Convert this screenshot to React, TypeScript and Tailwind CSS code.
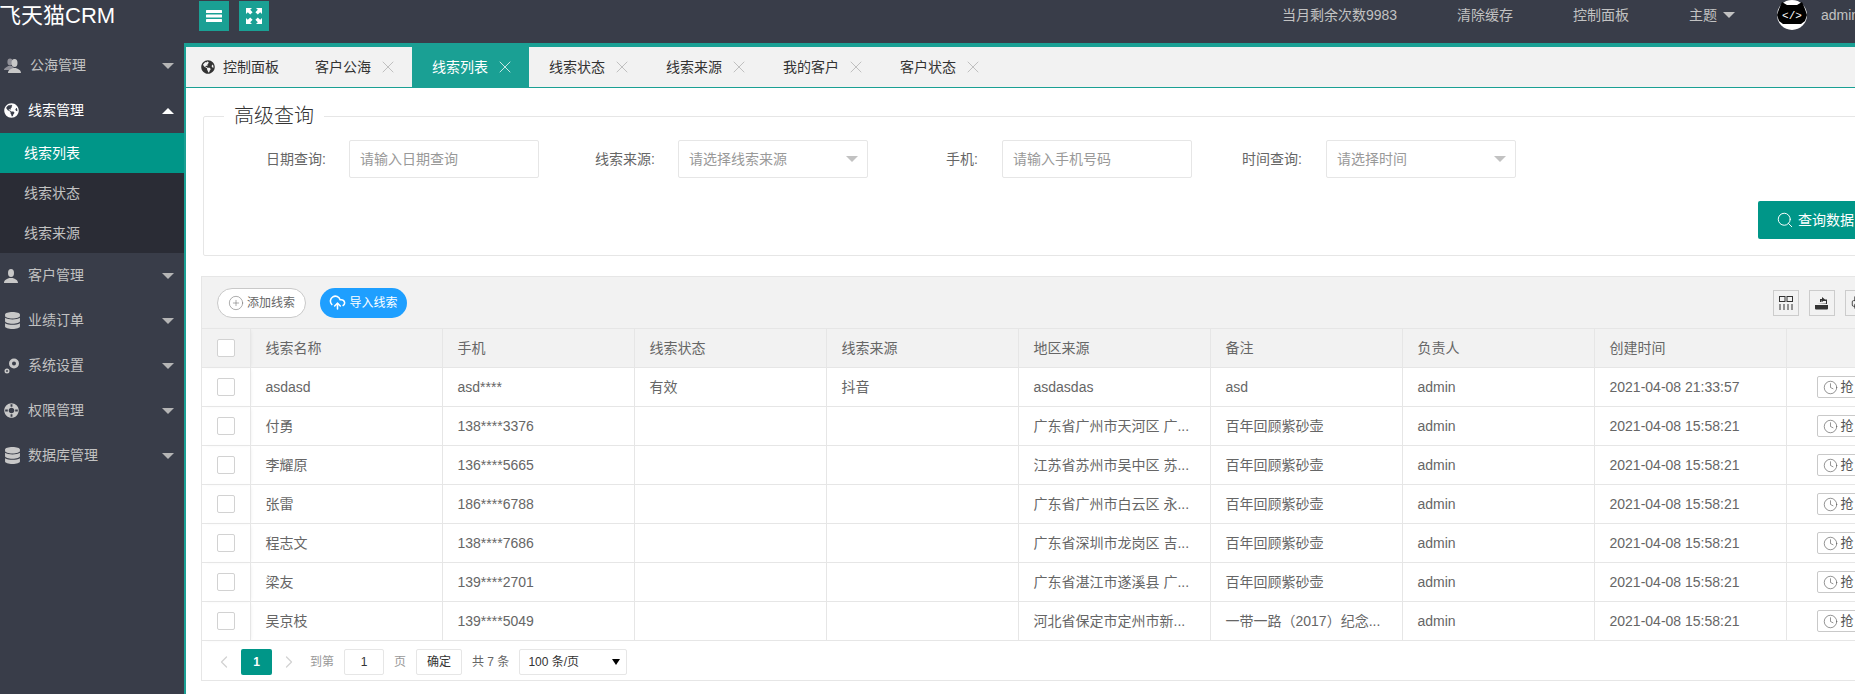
import { FaDatabase, FaGlobeAmericas, FaLifeRing } from 'react-icons/fa'
import { ChevronLeft, ChevronRight, CirclePlus, Clock, CloudUpload, Printer, Search, X } from 'lucide-react'

const font = 'font-["Liberation_Sans","Noto_Sans_CJK_SC",sans-serif]'

const tabs = ['客户公海', '线索列表', '线索状态', '线索来源', '我的客户', '客户状态']

const columns = ['线索名称', '手机', '线索状态', '线索来源', '地区来源', '备注', '负责人', '创建时间', '']

const rows = [
  ['asdasd', 'asd****', '有效', '抖音', 'asdasdas', 'asd', 'admin', '2021-04-08 21:33:57'],
  ['付勇', '138****3376', '', '', '广东省广州市天河区 广...', '百年回顾紫砂壶', 'admin', '2021-04-08 15:58:21'],
  ['李耀原', '136****5665', '', '', '江苏省苏州市吴中区 苏...', '百年回顾紫砂壶', 'admin', '2021-04-08 15:58:21'],
  ['张雷', '186****6788', '', '', '广东省广州市白云区 永...', '百年回顾紫砂壶', 'admin', '2021-04-08 15:58:21'],
  ['程志文', '138****7686', '', '', '广东省深圳市龙岗区 吉...', '百年回顾紫砂壶', 'admin', '2021-04-08 15:58:21'],
  ['梁友', '139****2701', '', '', '广东省湛江市遂溪县 广...', '百年回顾紫砂壶', 'admin', '2021-04-08 15:58:21'],
  ['吴京枝', '139****5049', '', '', '河北省保定市定州市新...', '一带一路（2017）纪念...', 'admin', '2021-04-08 15:58:21'],
]

const CaretDown = ({ className }: { className: string }) => (
  <span className={`block h-0 w-0 border-x-[6px] border-t-[6px] border-x-transparent ${className}`} />
)

const UserIcon = () => (
  <svg width="14" height="14" viewBox="0 0 14 14" fill="#c8c8c8">
    <ellipse cx="7" cy="4" rx="3" ry="4" />
    <path d="M0 14c0-3 3-4 5-5h4c2 1 5 2 5 5z" />
  </svg>
)

const UsersIcon = () => (
  <svg width="17" height="15" viewBox="0 0 17 15">
    <ellipse cx="6" cy="4" rx="2.6" ry="3.4" fill="#8f8f97" />
    <path d="M0 12c0-2 3-3 4-4h4l2 2v2z" fill="#8f8f97" />
    <ellipse cx="10.5" cy="5" rx="3" ry="4" fill="#c8c8c8" />
    <path d="M4 15c0-3 3-4 5-5h3c2 1 5 2 5 5z" fill="#c8c8c8" />
  </svg>
)

const CogsIcon = () => (
  <svg width="16" height="16" viewBox="0 0 16 16" fill="none" stroke="#c8c8c8">
    <circle cx="10" cy="5.500" r="3.500" strokeWidth="3" />
    <circle cx="3" cy="13" r="1.700" strokeWidth="1.600" />
  </svg>
)

const NavItem = ({ icon, label, open, indent }: { icon: React.ReactNode; label: string; open?: boolean; indent?: boolean }) => (
  <div className={`flex h-[45px] items-center pl-[4px] pr-[10px] text-[14px] ${open ? 'text-white' : 'text-[#c2c2c2]'}`}>
    <span className={`flex items-center ${indent ? 'w-[26px]' : 'w-[24px]'}`}>{icon}</span>
    <span className="flex-1">{label}</span>
    {open
      ? <span className="block h-0 w-0 border-x-[6px] border-b-[6px] border-x-transparent border-b-white" />
      : <CaretDown className="border-t-[#b5b5b5]" />}
  </div>
)

const Checkbox = () => <span className="block h-[18px] w-[18px] rounded-[2px] border border-[#d2d2d2] bg-white" />

const Select = ({ text }: { text: string }) => (
  <div className="flex h-[38px] w-[190px] items-center justify-between rounded-[2px] border border-[#e6e6e6] pl-[10px] pr-[9px] text-[14px] text-[#999]">
    {text}
    <CaretDown className="border-t-[#c2c2c2]" />
  </div>
)

const Input = ({ text }: { text: string }) => (
  <div className="flex h-[38px] w-[190px] items-center rounded-[2px] border border-[#e6e6e6] pl-[10px] text-[14px] text-[#999]">{text}</div>
)

const ToolBtn = ({ children }: { children: React.ReactNode }) => (
  <span className="flex h-[26px] w-[26px] items-center justify-center border border-[#ccc] text-[#333]">{children}</span>
)

const App = () => {
  return (
    <div className={`flex h-[694px] w-[1855px] flex-col overflow-hidden bg-[#393D49] ${font}`}>
      <header className="flex h-[43px] shrink-0 items-start">
        <div className="w-[199px] shrink-0 pt-[1px] indent-[-1px] text-[22px] leading-[30px] text-white">飞天猫CRM</div>
        <button className="mt-[1px] flex h-[30px] w-[30px] shrink-0 items-center justify-center bg-[#1AA094] text-white">
          <svg width="16" height="14" viewBox="0 0 16 14" fill="currentColor"><rect y="1" width="16" height="3" rx="0.5" /><rect y="5.5" width="16" height="3" rx="0.5" /><rect y="10" width="16" height="3" rx="0.5" /></svg>
        </button>
        <button className="ml-[10px] mt-[1px] flex h-[30px] w-[30px] shrink-0 items-center justify-center bg-[#1AA094] text-white">
          <svg width="16" height="16" viewBox="0 0 16 16" fill="currentColor"><path d="M0 0h6L4.2 1.8 6.6 4.2 4.2 6.6 1.8 4.2 0 6zM16 0v6l-1.8-1.8-2.4 2.4-2.4-2.4 2.4-2.4L10 0zM0 16v-6l1.8 1.8 2.4-2.4 2.4 2.4-2.4 2.4L6 16zM16 16h-6l1.8-1.8-2.4-2.4 2.4-2.4 2.4 2.4L16 10z" /></svg>
        </button>
        <div className="ml-[1013px] flex h-[30px] shrink-0 items-center text-[14px] text-[#c2c2c2]">
          <span className="w-[175px]">当月剩余次数9983</span>
          <span className="w-[116px]">清除缓存</span>
          <span className="w-[116px]">控制面板</span>
          <span className="flex w-[88px] items-center gap-[6px]">主题<CaretDown className="border-t-[#c2c2c2]" /></span>
          <svg width="30" height="30" viewBox="0 0 30 30">
            <circle cx="15" cy="15" r="15" fill="#fff" />
            <path d="M2 9 5 2l5 3h10l5-3 3 7 2 6-2 6-4 3H6l-4-3-2-6z" fill="#000" />
            <text x="15" y="19" textAnchor="middle" fill="#fff" fontSize="11" fontFamily="Liberation Mono, monospace">&lt;/&gt;</text>
          </svg>
          <span className="ml-[14px]">admin</span>
        </div>
      </header>

      <div className="flex min-h-0 flex-1">
        <aside className="w-[184px] shrink-0">
          <NavItem icon={<UsersIcon />} label="公海管理" indent />
          <NavItem icon={<FaGlobeAmericas size={15} className="text-white" />} label="线索管理" open />
          <div className="bg-[#2A2C35] text-[14px] text-[#c2c2c2]">
            <div className="flex h-[40px] items-center bg-[#009688] pl-[24px] text-white">线索列表</div>
            <div className="flex h-[40px] items-center pl-[24px]">线索状态</div>
            <div className="flex h-[40px] items-center pl-[24px]">线索来源</div>
          </div>
          <NavItem icon={<UserIcon />} label="客户管理" />
          <NavItem icon={<FaDatabase size={17} className="text-[#c8c8c8]" />} label="业绩订单" />
          <NavItem icon={<CogsIcon />} label="系统设置" />
          <NavItem icon={<FaLifeRing size={15} className="rotate-45 text-[#c8c8c8]" />} label="权限管理" />
          <NavItem icon={<FaDatabase size={17} className="text-[#c8c8c8]" />} label="数据库管理" />
        </aside>

        <main className="min-w-0 flex-1 overflow-hidden border-l-[2px] border-t-[4px] border-[#1AA094] bg-white">
          <div className="flex h-[41px] border-b border-[#1AA094] bg-[#f2f2f2] text-[14px] text-[#333]">
            <div className="flex w-[109px] items-center pl-[15px]">
              <FaGlobeAmericas size={14} className="mr-[8px] text-[#333]" />控制面板
            </div>
            {tabs.map((tab, i) => (
              <div key={tab} className={`flex w-[117px] items-center pl-[20px] ${i === 1 ? 'bg-[#1AA094] text-white' : ''}`}>
                {tab}
                <X size={20} strokeWidth={1.1} className={`ml-[7px] ${i === 1 ? 'text-[#d8efec]' : 'text-[#bbb]'}`} />
              </div>
            ))}
          </div>

          <div className="w-[1800px] pl-[15px]">
            <fieldset className="ml-[2px] mt-[16px] h-[152px] rounded-[2px] border border-[#e6e6e6] px-0 pb-0">
              <legend className="ml-[20px] px-[10px] text-[20px] font-light leading-[24px] text-[#333]">高级查询</legend>
              <div className="flex pt-[12px] text-[14px] text-[#666]">
                <span className="flex h-[38px] w-[122px] items-center justify-end">日期查询:</span>
                <div className="ml-[23px]"><Input text="请输入日期查询" /></div>
                <span className="flex h-[38px] w-[116px] items-center justify-end">线索来源:</span>
                <div className="ml-[23px]"><Select text="请选择线索来源" /></div>
                <span className="flex h-[38px] w-[110px] items-center justify-end">手机:</span>
                <div className="ml-[24px]"><Input text="请输入手机号码" /></div>
                <span className="flex h-[38px] w-[110px] items-center justify-end">时间查询:</span>
                <div className="ml-[24px]"><Select text="请选择时间" /></div>
              </div>
              <button className="ml-[1554px] mt-[23px] flex h-[38px] w-[110px] items-center gap-[4px] rounded-[2px] bg-[#009688] pl-[18px] text-[14px] text-white">
                <Search size={18} strokeWidth={1.3} />查询数据
              </button>
            </fieldset>

            <div className="mt-[20px] w-[1778px] border border-[#e6e6e6]">
              <div className="flex h-[51px] items-center justify-between bg-[#f2f2f2] pl-[15px] pr-[107px]">
                <div className="flex items-center gap-[14px]">
                  <button className="flex h-[30px] w-[89px] items-center justify-center gap-[3px] rounded-full border border-[#c9c9c9] bg-white text-[12px] text-[#666]">
                    <CirclePlus size={16} strokeWidth={0.8} />添加线索
                  </button>
                  <button className="flex h-[30px] w-[87px] items-center justify-center gap-[3px] rounded-full bg-[#1E9FFF] text-[12px] text-white">
                    <CloudUpload size={17} strokeWidth={2.2} />导入线索
                  </button>
                </div>
                <div className="flex items-center gap-[10px]">
                  <ToolBtn>
                    <svg width="14" height="14" viewBox="0 0 14 14" fill="none" stroke="currentColor"><rect x="0.5" y="0.5" width="5.5" height="5" /><rect x="8" y="0.5" width="5.5" height="5" /><path d="M1 8v6M5 8v6M9 8v6M13 8v6" /></svg>
                  </ToolBtn>
                  <ToolBtn>
                    <svg width="14" height="14" viewBox="0 0 14 14" fill="currentColor"><path d="M0 9h13v3.5a1 1 0 0 1-1 1H1a1 1 0 0 1-1-1zM2 7.5h9V5H8V3.5h4V8h-1zM5 6V3h2V1l3 2.5L7 6V4.5H6.500V6z" /></svg>
                  </ToolBtn>
                  <ToolBtn><Printer size={15} strokeWidth={1.4} /></ToolBtn>
                </div>
              </div>
              <table className="w-[1776px] table-fixed border-collapse text-[14px] text-[#666]">
                <colgroup>
                  <col className="w-[48px]" />
                  {columns.map((c, i) => <col key={i} className="w-[192px]" />)}
                </colgroup>
                <thead>
                  <tr className="h-[39px] bg-[#f2f2f2]">
                    <th className="border-y border-r border-[#e6e6e6] pl-[15px] shadow-[2px_0_4px_-2px_rgba(0,0,0,0.12)]"><Checkbox /></th>
                    {columns.map((c, i) => (
                      <th key={i} className="border border-[#e6e6e6] pl-[15px] text-left font-normal">{c}</th>
                    ))}
                  </tr>
                </thead>
                <tbody>
                  {rows.map((row, i) => (
                    <tr key={i} className="h-[39px]">
                      <td className="border-y border-r border-[#e6e6e6] pl-[15px] shadow-[2px_0_4px_-2px_rgba(0,0,0,0.12)]"><Checkbox /></td>
                      {row.map((cell, j) => (
                        <td key={j} className="whitespace-nowrap border border-[#e6e6e6] px-[15px]">{cell}</td>
                      ))}
                      <td className="border border-[#e6e6e6] pl-[30px]">
                        <span className="flex h-[22px] w-[60px] items-center gap-[3px] rounded-[2px] border border-[#c9c9c9] pl-[5px] text-[13px] text-[#555]">
                          <Clock size={15} strokeWidth={1} />抢
                        </span>
                      </td>
                    </tr>
                  ))}
                </tbody>
              </table>
              <div className="flex h-[39px] items-center pl-[12px] pt-[2px] text-[12px] text-[#666]">
                <span className="flex w-[27px] text-[#d2d2d2]"><ChevronLeft size={20} strokeWidth={1.5} /></span>
                <span className="flex h-[26px] w-[31px] items-center justify-center rounded-[2px] bg-[#009688] font-bold text-white">1</span>
                <span className="flex w-[38px] pl-[7px] text-[#d2d2d2]"><ChevronRight size={20} strokeWidth={1.5} /></span>
                <span className="text-[#999]">到第</span>
                <span className="ml-[10px] flex h-[26px] w-[40px] items-center justify-center rounded-[2px] border border-[#e6e6e6] text-[#333]">1</span>
                <span className="ml-[10px] text-[#999]">页</span>
                <span className="ml-[10px] flex h-[26px] w-[46px] items-center justify-center rounded-[2px] border border-[#e6e6e6] text-[#333]">确定</span>
                <span className="ml-[10px]">共 7 条</span>
                <span className="ml-[10px] flex h-[26px] w-[108px] items-center justify-between rounded-[2px] border border-[#e6e6e6] pl-[8px] pr-[6px] text-[#333]">
                  100 条/页
                  <span className="block h-0 w-0 border-x-[4px] border-t-[6px] border-x-transparent border-t-black" />
                </span>
              </div>
            </div>
          </div>
        </main>
      </div>
    </div>
  )
}

export default App
